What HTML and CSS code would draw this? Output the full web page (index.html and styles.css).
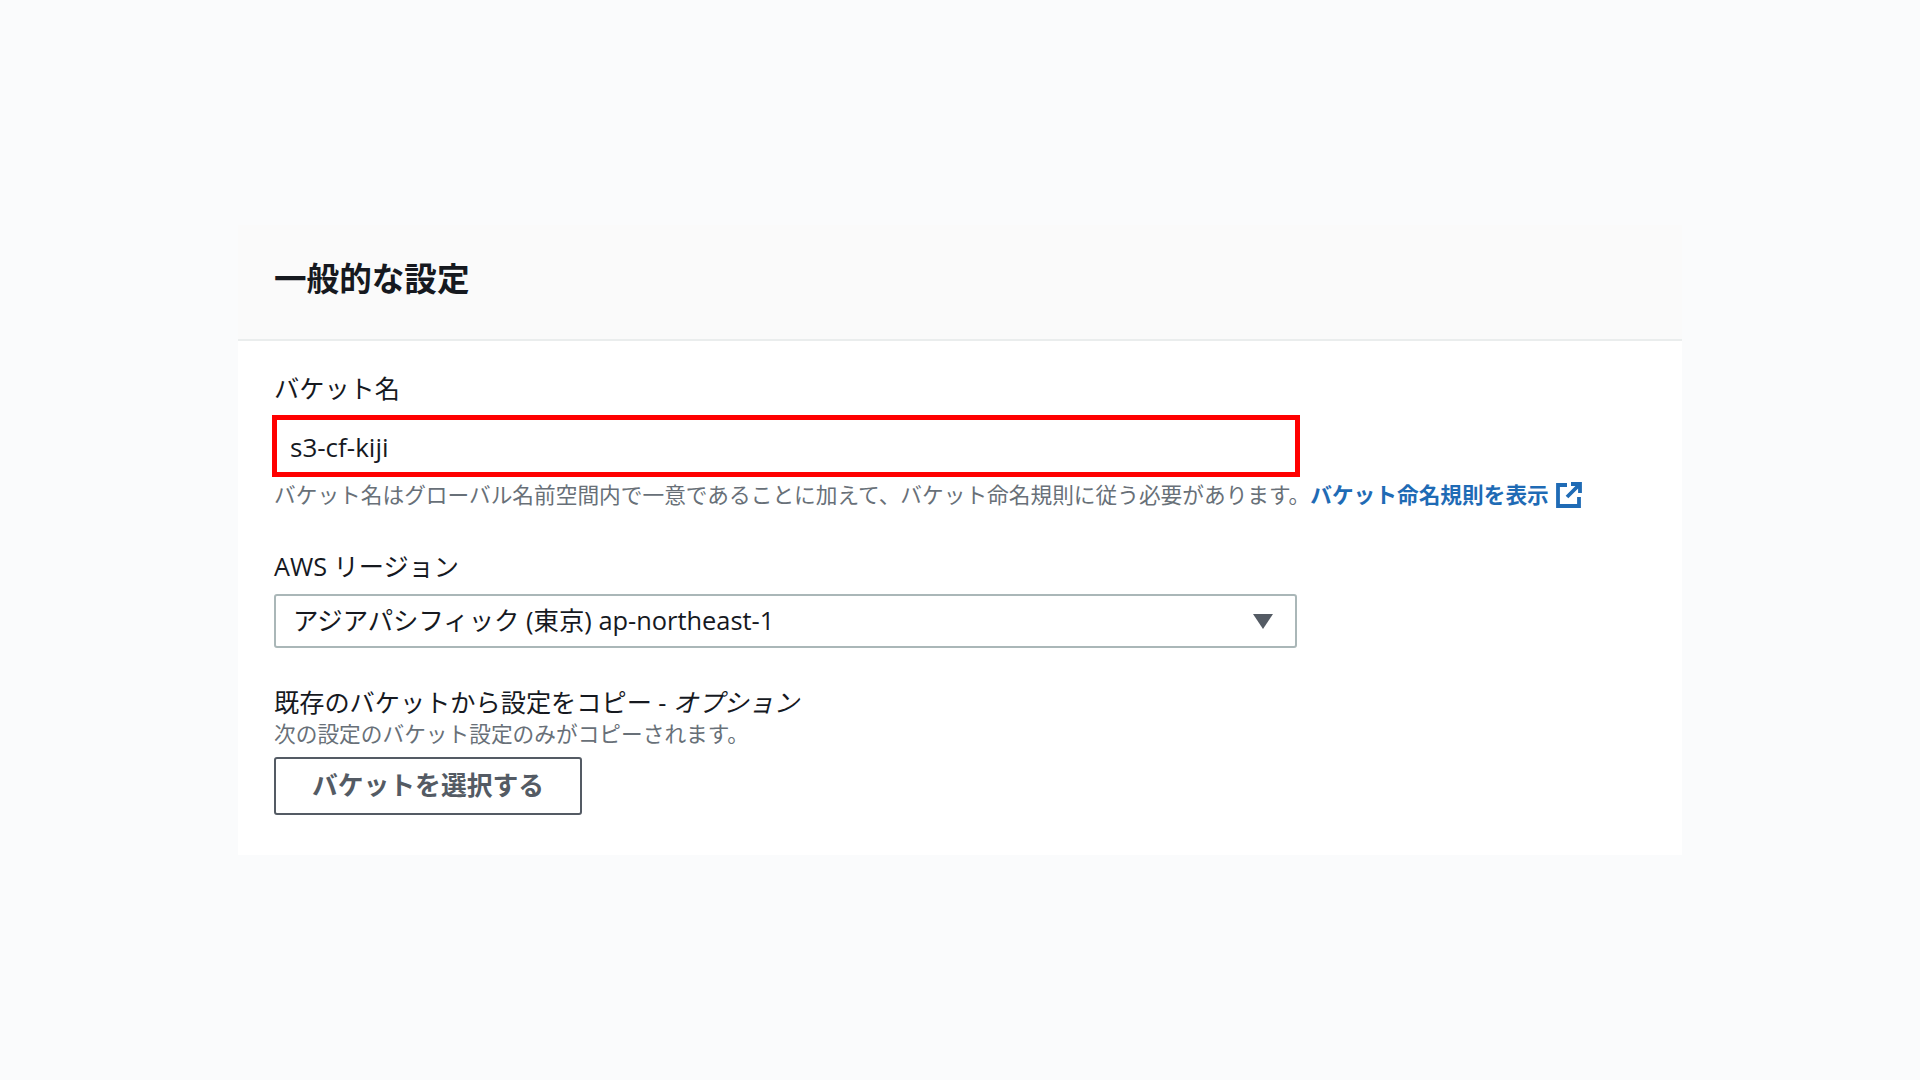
FILE: index.html
```
<!DOCTYPE html>
<html lang="ja">
<head>
<meta charset="utf-8">
<title>一般的な設定</title>
<link rel="stylesheet" href="styles.css">
</head>
<body>
<main class="card">
  <header class="card-header"><h2 class="card-title">一般的な設定</h2></header>
  <div class="card-body">
    <section class="field field-name">
      <label class="label">バケット名</label>
      <div class="name-input">s3-cf-kiji</div>
      <p class="hint">バケット名はグローバル名前空間内で一意であることに加えて、バケット命名規則に従う必要があります。<a class="link">バケット命名規則を表示<svg class="ext-icon" viewBox="0 0 26 26" fill="none" stroke="currentColor" stroke-width="3.8"><path d="M11 3H2v21h21v-9"/><path d="M11 15 24 2M15 2h9v9"/></svg></a></p>
    </section>
    <section class="field field-region">
      <label class="label">AWS リージョン</label>
      <div class="select"><span>アジアパシフィック (東京) ap-northeast-1</span><i class="caret"></i></div>
    </section>
    <section class="field field-copy">
      <label class="label">既存のバケットから設定をコピー - <em class="opt">オプション</em></label>
      <p class="desc">次の設定のバケット設定のみがコピーされます。</p>
      <button class="btn">バケットを選択する</button>
    </section>
  </div>
</main>
</body>
</html>
```
FILE: styles.css
```
* { box-sizing: border-box; }
html, body { margin: 0; height: 100%; }
body {
  background: #fafbfc;
  padding: 225px 238px 0;
  font-family: "Open Sans", "Noto Sans CJK JP", sans-serif;
  color: #16191f;
}
.card { width: 1444px; height: 630px; background: #fff; }
.card-header {
  height: 116px;
  background: #fafafa;
  border-bottom: 2px solid #eaeded;
  padding: 33px 36px 0;
}
.card-title { margin: 0; font-size: 32.6px; line-height: 42px; font-weight: 700; color: #16191f; }
.card-body { padding: 0 36px; }
.label { display: block; font-size: 25.2px; line-height: 34px; color: #16191f; }
.field-name { padding-top: 30px; }
.name-input {
  width: 1028px;
  height: 62px;
  margin: 10px 0 0 -2px;
  border: 5px solid #ff0000;
  padding: 0 13px;
  font-size: 26px;
  line-height: 54px;
  font-weight: 500;
  color: #16191f;
}
.hint { margin: 2px 0 0; font-size: 21.7px; line-height: 32px; color: #687078; white-space: nowrap; }
.link { color: #1f6bb5; font-weight: 700; display: inline-flex; align-items: center; }
.ext-icon { width: 26px; height: 26px; margin-left: 7px; }
.field-region { padding-top: 38px; }
.select {
  width: 1023px;
  height: 54px;
  margin-top: 11px;
  border: 2px solid #aab7b8;
  border-radius: 3px;
  padding: 0 22px 0 17px;
  display: flex;
  align-items: center;
  justify-content: space-between;
  font-size: 25.4px;
  line-height: 48px;
  color: #16191f;
}
.select span { position: relative; top: -1px; }
.caret { width: 0; height: 0; border-left: 10px solid transparent; border-right: 10px solid transparent; border-top: 15px solid #545b64; }
.field-copy { padding-top: 37px; }
.opt { font-style: italic; }
.desc { margin: 0; font-size: 21.7px; line-height: 30px; color: #687078; }
.btn {
  display: block;
  width: 308px;
  height: 58px;
  margin-top: 8px;
  background: #fff;
  border: 2px solid #545b64;
  border-radius: 3px;
  font: 700 25.8px/50px "Open Sans", "Noto Sans CJK JP", sans-serif;
  color: #545b64;
  padding: 0 0 3px;
}
```
